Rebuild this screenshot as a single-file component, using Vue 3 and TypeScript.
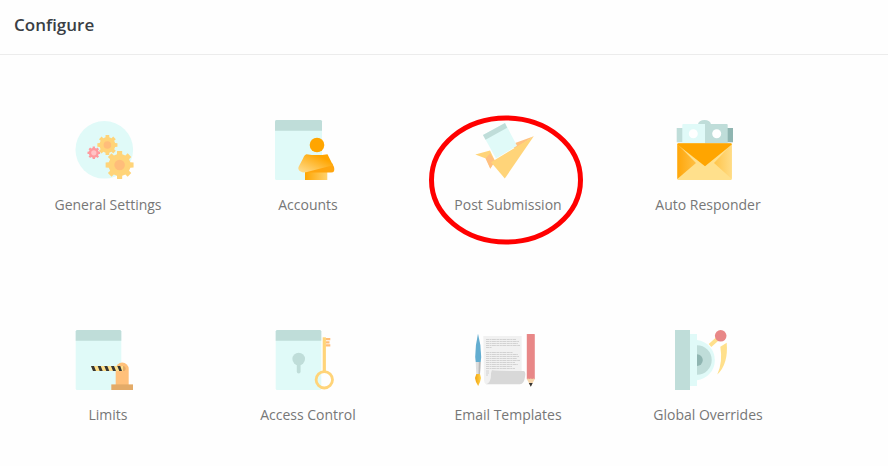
<script setup lang="ts">
type IconName =
  | 'general' | 'accounts' | 'post' | 'responder'
  | 'limits' | 'access' | 'email' | 'overrides'

interface Item {
  label: string
  icon: IconName
  highlighted?: boolean
}

const items: Item[] = [
  { label: 'General Settings', icon: 'general' },
  { label: 'Accounts', icon: 'accounts' },
  { label: 'Post Submission', icon: 'post', highlighted: true },
  { label: 'Auto Responder', icon: 'responder' },
  { label: 'Limits', icon: 'limits' },
  { label: 'Access Control', icon: 'access' },
  { label: 'Email Templates', icon: 'email' },
  { label: 'Global Overrides', icon: 'overrides' },
]

// Outline of an eight-toothed gear.
function gear(cx: number, cy: number, outer: number): string {
  const inner = outer * 0.78
  const points: string[] = []
  for (let i = 0; i < 8; i++) {
    const a = (i * Math.PI) / 4
    const steps: [number, number][] = [
      [-0.24, inner], [-0.18, outer], [0.18, outer], [0.24, inner],
    ]
    for (const [d, r] of steps) {
      points.push(`${(cx + r * Math.cos(a + d)).toFixed(2)} ${(cy + r * Math.sin(a + d)).toFixed(2)}`)
    }
  }
  return `M${points.join('L')}Z`
}

const gears = [
  { cx: 32.4, cy: 25, r: 10.2, hub: 3.8, fill: '#ffd479', hubFill: '#ffbd7a' },
  { cx: 18.8, cy: 32.8, r: 6.4, hub: 2.6, fill: '#ff9a9e', hubFill: '#ffc4c6' },
  { cx: 44.6, cy: 45, r: 14.2, hub: 5.3, fill: '#ffd479', hubFill: '#ffbd7a' },
]

const textLines = [9.5, 11.5, 13.5, 15.5, 17.5, 22.5, 24.5, 26.5, 28.5, 30.5, 32.5, 34.5, 36.5, 38.5, 41, 43, 45]
const lineEnds = [41, 44, 43, 45, 17, 38, 43, 44, 42, 45, 40, 43, 37, 40, 14, 14, 13]
</script>

<template>
  <main class="page">
    <header class="header">
      <h1 class="title">Configure</h1>
    </header>
    <nav class="grid" aria-label="Configure">
      <a v-for="item in items" :key="item.label" class="item" href="#">
        <svg class="icon" viewBox="0 0 66 60" aria-hidden="true">
          <g v-if="item.icon === 'general'">
            <circle cx="29.3" cy="29.8" r="28.8" fill="#e0faf8" />
            <template v-for="g in gears" :key="g.r">
              <path :d="gear(g.cx, g.cy, g.r)" :fill="g.fill" />
              <circle :cx="g.cx" :cy="g.cy" :r="g.hub" :fill="g.hubFill" />
            </template>
          </g>

          <g v-else-if="item.icon === 'accounts'">
            <defs>
              <linearGradient id="arms" x1="1" y1="0" x2="0.1" y2="1">
                <stop offset="0.25" stop-color="#ffa500" />
                <stop offset="1" stop-color="#ffdc8c" />
              </linearGradient>
              <linearGradient id="torso" x1="0" y1="0" x2="1" y2="0">
                <stop offset="0" stop-color="#ffa500" />
                <stop offset="1" stop-color="#ffd26e" />
              </linearGradient>
            </defs>
            <rect width="47" height="60" rx="1.5" fill="#e0faf8" />
            <path d="M0 10.7V1.5Q0 0 1.5 0H45.5Q47 0 47 1.5V10.7Z" fill="#bfddd9" />
            <circle cx="42" cy="25" r="7.3" fill="#ffa500" />
            <path d="M30 51H52.3V60H30Z" fill="url(#torso)" />
            <path d="M57 43L59 47Q60.5 52.5 56 52.5H31L30 49.5Z" fill="#ffa50f" />
            <path d="M31.5 34.2Q42 36 52.5 34.2L58 45.2L31 52.3L28 52.5Q22.3 51 23.5 47L28 38.5Q29.5 34.5 31.5 34.2Z" fill="url(#arms)" />
          </g>

          <g v-else-if="item.icon === 'post'">
            <path d="M.3 34.6L15 30.4L20 41L15.3 48.5L11.5 38.8Z" fill="#ffd479" />
            <path d="M10.5 38.6L15 33.5L20 41L15.3 48.8Z" fill="#ffc080" />
            <path d="M36 24.5L58.8 16.2L40 29Z" fill="#ffc080" />
            <path d="M58.8 16.2L29.8 58.5L16 42.3Z" fill="#ffd479" />
            <path d="M8 15L30 3L42 25.7L21 38.5Z" fill="#e0faf8" />
            <path d="M8 15L30 3L32.2 7.7L10.5 19.8Z" fill="#bfddd9" />
          </g>

          <g v-else-if="item.icon === 'responder'">
            <defs>
              <linearGradient id="leftSide" x1="0" y1="0" x2="1" y2="0">
                <stop offset="0" stop-color="#ffa60a" />
                <stop offset="1" stop-color="#ffc044" />
              </linearGradient>
              <linearGradient id="rightSide" x1="0" y1="0" x2="1" y2="0">
                <stop offset="0" stop-color="#ffc449" />
                <stop offset="1" stop-color="#ffdc86" />
              </linearGradient>
            </defs>
            <ellipse cx="29.5" cy="4.5" rx="6.5" ry="4.5" fill="#bfddd9" />
            <path d="M1.7 8H8V22.3H1.7Z" fill="#bfddd9" />
            <path d="M52 8H58V22.3H52Z" fill="#8fb5b1" />
            <path d="M7.3 5Q7.3 4 8.3 4H30V23.5H7.3Z" fill="#e0faf8" />
            <path d="M30 4H51.7Q52.7 4 52.7 5V23.5H30Z" fill="#bfddd9" />
            <circle cx="18.3" cy="13.8" r="4.5" fill="#fff" />
            <circle cx="41.7" cy="13.8" r="4.5" fill="#fff" />
            <rect x="2.3" y="23.3" width="54.5" height="36.7" rx="1" fill="#ffe08c" />
            <path d="M2.3 24V59L21 43Z" fill="url(#leftSide)" />
            <path d="M56.8 24V59L39 43Z" fill="url(#rightSide)" />
            <path d="M2.3 24.5Q2.3 23.3 3.5 23.3H55.5Q56.8 23.3 56.8 24.5L30 46.3Z" fill="#ffa500" />
          </g>

          <g v-else-if="item.icon === 'limits'">
            <rect x=".7" width="45.6" height="60" rx="1.5" fill="#e0faf8" />
            <path d="M.7 10.7V1.5Q.7 0 2.2 0H44.8Q46.3 0 46.3 1.5V10.7Z" fill="#bfddd9" />
            <path d="M40.7 55V39A6.5 6.4 0 0 1 53.7 39V55Z" fill="#ffc07a" />
            <circle cx="48" cy="38.5" r="2.6" fill="#e3ab68" />
            <path d="M16 36H48V41H18Z" fill="#ffe08c" />
            <path d="M16 36H19L21 41H18ZM22.7 36H25.7L27.7 41H24.7ZM29.3 36H32.3L34.3 41H31.3ZM36 36H39L41 41H38ZM42.3 36H45.3L47 41H44.3Z" fill="#353535" />
            <rect x="36.3" y="54.4" width="21.7" height="5.6" fill="#e3ab68" />
          </g>

          <g v-else-if="item.icon === 'access'">
            <rect x=".7" width="45.6" height="60" rx="1.5" fill="#e0faf8" />
            <path d="M.7 10.7V1.5Q.7 0 2.2 0H44.8Q46.3 0 46.3 1.5V10.7Z" fill="#bfddd9" />
            <circle cx="23.7" cy="29" r="6.3" fill="#bfddd9" />
            <path d="M23.7 30V41.5" stroke="#bfddd9" stroke-width="3.8" stroke-linecap="round" />
            <path d="M50.5 9.2H55.3M50.5 12.4H54.5M50.5 15.4H55.3" stroke="#ffbd7a" stroke-width="2.2" />
            <path d="M49.3 7.3V42" stroke="#ffd479" stroke-width="3.2" />
            <circle cx="49.3" cy="49.8" r="8.2" fill="none" stroke="#ffd479" stroke-width="2.8" />
          </g>

          <g v-else-if="item.icon === 'email'">
            <defs>
              <linearGradient id="bristles" x1="0" y1="0" x2="1" y2="0">
                <stop offset="0" stop-color="#f2a30d" />
                <stop offset="1" stop-color="#ffd24d" />
              </linearGradient>
            </defs>
            <path d="M8.3 6H46.7V42H16Q17 54.3 12 54.3Q9 54.3 9 49Z" fill="#f1f1f1" />
            <path
              v-for="(y, i) in textLines" :key="y"
              :d="`M11 ${y}H${lineEnds[i]}`"
              stroke="#d2d2d2" stroke-width="1" stroke-dasharray="3 .5 2 .4 4 .5"
            />
            <path d="M17 40Q18 41 49 41Q51 42 50 47Q49 54.3 45 54.3H11Q16.5 53 16 43Z" fill="#d8d8d8" />
            <path d="M3 3.7Q6.2 15 6.2 27L5.7 32H.7L.2 27Q.2 15 3 3.7Z" fill="#63add0" />
            <path d="M.7 32H5.7L5 44H1.3Z" fill="#dedede" />
            <path d="M3.8 32H5.7L5 44H3.5Z" fill="#b8b8b8" />
            <path d="M1.3 44H5L6 48Q5.6 51 3.2 56Q.3 51.5 0 48Z" fill="url(#bristles)" />
            <rect x="51.8" y="4" width="8" height="45.3" rx=".6" fill="#e88787" />
            <path d="M51.8 49Q53 48 54.3 49Q55.7 48 57.2 49Q58.5 48 59.8 49L55.8 56.5Z" fill="#f6d6ac" />
            <path d="M53.8 53H57.7L55.8 56.7Z" fill="#353535" />
          </g>

          <g v-else>
            <path d="M35 15.5L44 7.5" stroke="#ffe08c" stroke-width="4" />
            <path d="M51.7 12.7Q53.5 34 42.3 44.5Q48 32 45.3 16.7Z" fill="#ffe08c" />
            <circle cx="45.7" cy="5.8" r="5.8" fill="#e88787" />
            <path d="M15 4H22V10A20.3 20.3 0 0 1 22 50.3V56H15Z" fill="#e0faf8" />
            <rect width="15" height="60" fill="#bfddd9" />
            <path d="M22 15.3A14.7 14.7 0 0 1 22 44.7Z" fill="#bfddd9" />
            <path d="M22 24.3A5.8 5.8 0 0 1 22 35.9Z" fill="#8fb5b1" />
          </g>
        </svg>
        <span class="label">{{ item.label }}</span>
        <svg v-if="item.highlighted" class="ring" viewBox="0 0 156 130" aria-hidden="true">
          <ellipse cx="78" cy="65" rx="74.5" ry="62" fill="none" stroke="#f00" stroke-width="5" />
        </svg>
      </a>
    </nav>
  </main>
</template>

<style>
body {
  margin: 0;
  background: #fefefe;
}
</style>

<style scoped>
.page {
  font-family: "Open Sans", "Noto Sans", sans-serif;
}

.header {
  padding: 13px 14px 17px;
  border-bottom: 1px solid #ececec;
}

.title {
  margin: 0;
  font-size: 17px;
  line-height: 24px;
  font-weight: 600;
  color: #3a3f45;
}

.grid {
  display: grid;
  grid-template-columns: repeat(4, 1fr);
  row-gap: 115px;
  padding: 65px 80px 32px 8px;
}

.item {
  position: relative;
  display: flex;
  flex-direction: column;
  align-items: center;
  gap: 15px;
  color: #777;
  text-decoration: none;
}

.icon {
  display: block;
  width: 66px;
  height: 60px;
}

.label {
  font-size: 14px;
  line-height: 20px;
  white-space: nowrap;
}

.ring {
  position: absolute;
  top: -5px;
  left: 50%;
  width: 156px;
  height: 130px;
  margin-left: -80px;
  pointer-events: none;
}
</style>
